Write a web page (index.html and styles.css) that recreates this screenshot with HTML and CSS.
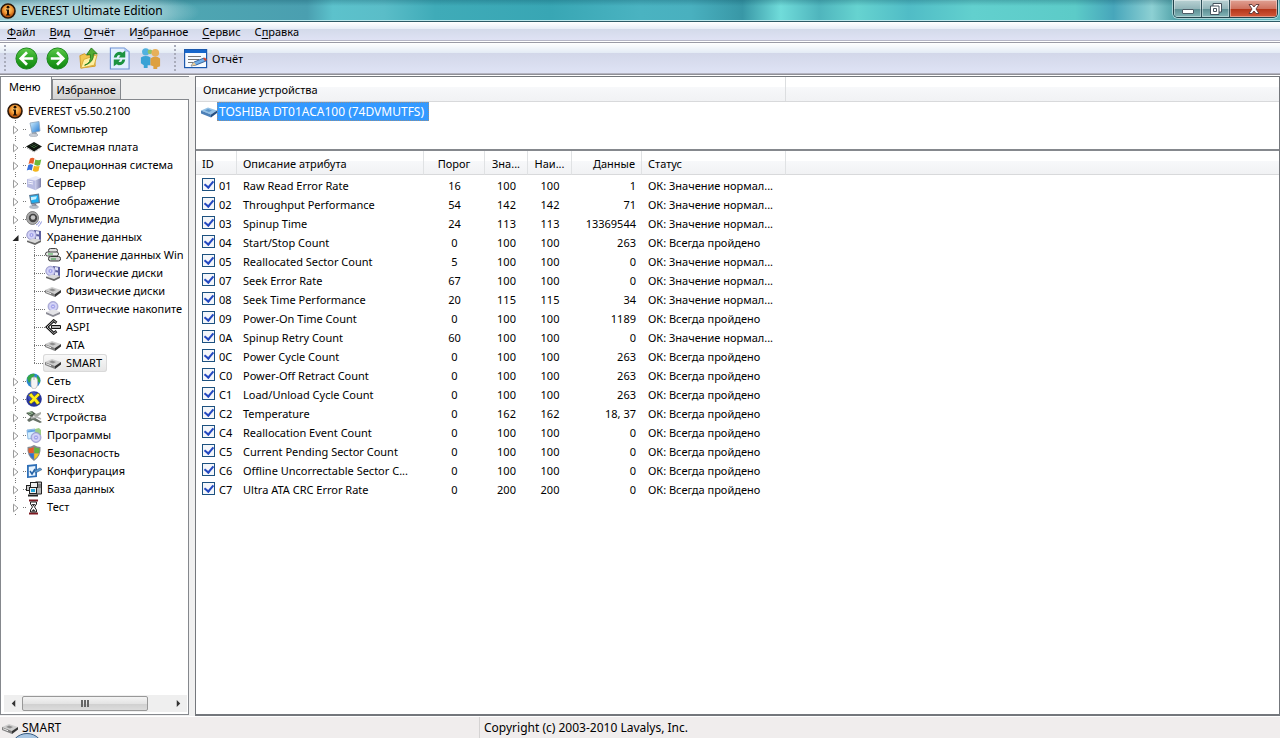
FILE: index.html
```html
<!DOCTYPE html>
<html lang="ru">
<head>
<meta charset="utf-8">
<title>EVEREST Ultimate Edition</title>
<link rel="stylesheet" href="styles.css">
</head>
<body>
<svg class="defs" aria-hidden="true">
  <defs>
    <linearGradient id="gGreen" x2="0" y2="1"><stop stop-color="#5fca4a"/><stop offset=".5" stop-color="#2ba524"/><stop offset="1" stop-color="#118511"/></linearGradient>
    <linearGradient id="gBlue" x2="1" y2="1"><stop stop-color="#d3f1ff"/><stop offset="1" stop-color="#1d76d2"/></linearGradient>
    <linearGradient id="gServer" x2="1" y2="0"><stop stop-color="#cfd1ee"/><stop offset="1" stop-color="#7c7fa9"/></linearGradient>
    <radialGradient id="gOrange" cx=".5" cy=".4"><stop stop-color="#ffd27a"/><stop offset=".6" stop-color="#f29a35"/><stop offset="1" stop-color="#c05a10"/></radialGradient>
    <radialGradient id="gDisc"><stop stop-color="#fff"/><stop offset=".25" stop-color="#9c9ce8"/><stop offset=".6" stop-color="#dcdcfa"/><stop offset="1" stop-color="#a9a9df"/></radialGradient>
  </defs>
  <symbol id="closed" viewBox="0 0 8 10"><path d="M1.500 1.200v7.600L6 5z" fill="#fff" stroke="#9a9a9a"/></symbol>
  <symbol id="open" viewBox="0 0 8 10"><path d="M6.500 2v6h-6z" fill="#222"/></symbol>
  <symbol id="info" viewBox="0 0 16 16"><circle cx="8" cy="8" r="7" fill="url(#gOrange)" stroke="#2a1607" stroke-width="1.6"/><circle cx="8" cy="4.2" r="1.4" fill="#1d0e02"/><path d="M6 6.600h3v5h1.200v1H6v-1h1v-4H6z" fill="#1d0e02"/></symbol>
  <symbol id="computer" viewBox="0 0 16 16"><path d="M4 2l9-1.500 1 9.500-8 2z" fill="url(#gBlue)" stroke="#8aa3bc" stroke-width=".8"/><path d="M6 12l4-1 1 2-5 1z" fill="#8b98a8"/><ellipse cx="7.500" cy="14" rx="4.500" ry="1.500" fill="#c9ced6" stroke="#9aa3af" stroke-width=".6"/></symbol>
  <symbol id="board" viewBox="0 0 16 16"><path d="M0 7.500L8 3l8 4.500-8 5z" fill="#101510"/><path d="M4 6.500l4-2.300 4 2.300L8 9z" fill="#4f9a4f"/><path d="M5 5.500l5 3M7 4.500l5 3M4 7.500l5-3M6 8.500l5-3" stroke="#111"/><path d="M1 9l7 4 7-4" stroke="#888" fill="none" stroke-width=".8" stroke-dasharray="1 1"/></symbol>
  <symbol id="windows" viewBox="0 0 16 16"><path d="M4 1.500q2.500-1.500 4.500 0L7.300 7Q5 5.500 2.500 7z" fill="#e8602c"/><path d="M9.300 2.500q3 1.500 6 0L14 8q-3 1.500-5.800-.5z" fill="#6eb93a"/><path d="M2.300 8Q4.500 6.500 7 8l-1.200 5.500Q3.500 12 .8 13.500z" fill="#3a72dc"/><path d="M8 8.700q3 1.300 5.700 0L12.500 14q-3 1.500-5.800-.3z" fill="#f3b51c"/></symbol>
  <symbol id="server" viewBox="0 0 16 16"><path d="M1 4l9-3 5 2-5 3z" fill="#e9eaf8"/><path d="M1 4l8 1.500V15l-8-3z" fill="#b9bce2"/><path d="M9 5.500L15 3v9l-6 3.500z" fill="url(#gServer)"/><path d="M2 6l5 1M2 8l5 1" stroke="#f5f5ff"/></symbol>
  <symbol id="display" viewBox="0 0 16 16"><path d="M3 2l10-1.500 1 9.500-9 1.500z" fill="#5d7b96"/><path d="M4.500 3l7.500-1 .7 7-7 1z" fill="#1eaef0"/><path d="M5 4l6-.8-1 3-5 1z" fill="#c7f2ff"/><path d="M6 11.500l4-.5 1 2-5 1z" fill="#778"/><ellipse cx="8" cy="14" rx="4.500" ry="1.400" fill="#bcc4cf" stroke="#8f99a8" stroke-width=".6"/></symbol>
  <symbol id="sound" viewBox="0 0 16 16"><ellipse cx="6.500" cy="7" rx="6" ry="6.500" fill="#aaa" stroke="#666" stroke-width=".8"/><circle cx="7" cy="7" r="4.200" fill="#444"/><circle cx="7" cy="6.500" r="2.300" fill="#c4c4c4"/><path d="M10 14q3-1 3.500-4M12 15.500q3-2 3.500-5" fill="none" stroke="#8f95dd"/></symbol>
  <symbol id="storage" viewBox="0 0 16 16"><path d="M8 1l7 1v9l-7-1z" fill="#5c5f9f"/><path d="M10 2l3 .5v3L10 5zM10 7l3 .5v3l-3-.5z" fill="#e6e7f8"/><circle cx="5.500" cy="6" r="4.800" fill="url(#gDisc)" stroke="#9999c5" stroke-width=".7"/><path d="M1 11.500L8 9.500l7 1.500-6 3z" fill="#d9d9d9"/><path d="M1 11.500L9 14l6-3v2l-6 3-8-3z" fill="#666"/></symbol>
  <symbol id="stack" viewBox="0 0 16 16"><rect x="3.500" y="1.500" width="9" height="4" rx="2" fill="#ddd" stroke="#444"/><rect x=".5" y="5" width="13" height="4" rx="2" fill="#eee" stroke="#444"/><rect x="3.500" y="9.500" width="12" height="4.500" rx="2" fill="#ccc" stroke="#333"/><path d="M3 7h5M6 12h5" stroke="#35a345"/></symbol>
  <symbol id="drive" viewBox="0 0 16 16"><path d="M0 7L7 4l9 3-6 4z" fill="#cfcfcf"/><path d="M0 7l10 4v3L0 10z" fill="#808080"/><path d="M10 11l6-4v2.500L10 14z" fill="#333"/><path d="M4 7l3-1.500L11 7 8 8.500z" fill="#8d8d8d"/><path d="M1 8.700l5 2" stroke="#eee"/></symbol>
  <symbol id="driveblue" viewBox="0 0 16 16"><path d="M0 6.500L7 3.500l9 3-6 4z" fill="#93c1e6"/><path d="M0 6.500l10 4v3L0 9.500z" fill="#4c80b8"/><path d="M10 10.500l6-4V9l-6 4.500z" fill="#244f82"/><path d="M4 6.500L7 5l4 1.500L8 8z" fill="#5f98cc"/></symbol>
  <symbol id="optical" viewBox="0 0 16 16"><circle cx="8" cy="5.500" r="5" fill="url(#gDisc)" stroke="#9999c5" stroke-width=".7"/><path d="M1 11l5-2h5l4 2-7 3z" fill="#e4e4e8"/><path d="M1 11l7 3 7-3v2l-7 3-7-3z" fill="#8b8b95"/></symbol>
  <symbol id="aspi" viewBox="0 0 16 16"><path d="M11.500 3.800L8.700 1.700 2 8l6.700 6.300 2.800-2.100" fill="none" stroke="#111" stroke-width="2.800"/><path d="M11.200 3.500L8.700 1.700 2 8l6.700 6.300 2.500-1.800" fill="none" stroke="#c4c4c4" stroke-width=".9"/><path d="M6.500 6.500h9v3h-9z" fill="#b5b5b5" stroke="#111"/></symbol>
  <symbol id="globe" viewBox="0 0 16 16"><circle cx="7.500" cy="7.500" r="7" fill="#2b86cf"/><path d="M1 5q3-5 8-4l-2 4-4 5zM11 2q4 3 3 8l-3-2z" fill="#35a746"/><path d="M5 7q0-3 3-3t3.500 3v5q-1 4-3.500 4T5 12z" fill="#f5f5f5" stroke="#b4b4b4" stroke-width=".7"/><path d="M8 4v3" stroke="#999" stroke-width=".7"/></symbol>
  <symbol id="directx" viewBox="0 0 16 16"><circle cx="8" cy="8" r="7.800" fill="#26349b"/><circle cx="7" cy="6" r="5" fill="#3e50bd"/><path d="M2.500 4l3-2 2.700 3.500L12 2l2 2-3.500 3.500L14 12l-3 1.800-2.600-3.600L5 13l-2-2 3.200-3.200z" fill="#ffee19" stroke="#5c5a00" stroke-width=".5"/></symbol>
  <symbol id="devices" viewBox="0 0 16 16"><path d="M0 4l6-2 4 3-5 3z" fill="#4d5a4d"/><path d="M2 4l4-1M3 6l4-2" stroke="#9cc29c"/><path d="M7 6l8-3v2l-5 4z" fill="#a6aaa3"/><path d="M1 11l5-4 10 6-2 1-7-3-4 2z" fill="#667066"/><path d="M5 9l6-1 4 2" stroke="#b8b8b8" fill="none" stroke-width="1.500"/></symbol>
  <symbol id="programs" viewBox="0 0 16 16"><path d="M1 3l8-1 1 9-8 1z" fill="#d4eeff" stroke="#8eb8e0"/><path d="M1.500 3.500l8-1v2l-8 1z" fill="#62a2e0"/><path d="M9 2l4-1 2 2v5l-5 1z" fill="#9dce86"/><circle cx="10" cy="10.500" r="5" fill="url(#gDisc)" stroke="#8f90c6" stroke-width=".7"/></symbol>
  <symbol id="shield" viewBox="0 0 16 16"><path d="M8 0q3 2 6.500 2 1 9-6.500 14Q.5 11 1.500 2 5 2 8 0z" fill="#858b92"/><path d="M7.700 2v6H3Q2.200 5.500 2.500 3.300 5 3.500 7.700 2z" fill="#e45c2c"/><path d="M8.300 2q2.500 1.500 5.200 1.300.2 2.500-.5 4.700H8.300z" fill="#64b33a"/><path d="M3 8.600h4.700v5.900Q4.500 12.500 3 8.600z" fill="#3270cf"/><path d="M8.300 8.600H13q-1.500 4-4.700 5.900z" fill="#f6c51f"/></symbol>
  <symbol id="config" viewBox="0 0 16 16"><path d="M1 2l10-1v13L1 15z" fill="#2e6fb7"/><path d="M2.800 3.700l6.500-.7v9.500l-6.500.7z" fill="#e7f4ff"/><path d="M4 8l2 3 3-5" stroke="#2563a8" stroke-width="1.500" fill="none"/><path d="M8 8l6-3 2 1.500L9.500 10z" fill="#5897d1" stroke="#2d5986" stroke-width=".6"/></symbol>
  <symbol id="database" viewBox="0 0 16 16"><path d="M9.500 1h6v12h-5z" fill="#b7b7b7" stroke="#222"/><path d="M11 4h4M11 6h4" stroke="#444"/><rect x="4.500" y="1.500" width="7" height="5" fill="#eee" stroke="#222"/><rect x=".5" y="4.500" width="4" height="5" fill="#ccc" stroke="#222"/><rect x="3.500" y="6.500" width="7" height="6" fill="#eee" stroke="#222"/><rect x="5" y="8" width="4" height="3" fill="#20a5d8"/><path d="M2 14.500h10" stroke="#222" stroke-width="2"/></symbol>
  <symbol id="hourglass" viewBox="0 0 16 16"><path d="M3 1.500h9M3 14.500h9" stroke="#7d1820" stroke-width="2.200"/><path d="M4.500 3v2l2 3-2 3v2h6v-2l-2-3 2-3V3z" fill="#fff" stroke="#222"/><path d="M5.500 5h4l-2 2.500zM5 12.500L7.500 10l2.500 2.500z" fill="#333"/></symbol>
  <symbol id="back" viewBox="0 0 24 24"><circle cx="12" cy="12" r="11" fill="url(#gGreen)" stroke="#18851a"/><path d="M12.500 5.500L6 12l6.500 6.500M6.500 12H19" fill="none" stroke="#fff" stroke-width="2.800"/></symbol>
  <symbol id="forward" viewBox="0 0 24 24"><circle cx="12" cy="12" r="11" fill="url(#gGreen)" stroke="#18851a"/><path d="M11.500 5.500L18 12l-6.500 6.500M17.500 12H5" fill="none" stroke="#fff" stroke-width="2.800"/></symbol>
  <symbol id="folder" viewBox="0 0 24 24"><path d="M3 9l5-2 2 2 8-2 1 13-15 2z" fill="#f2c64f" stroke="#d19a28"/><path d="M7 13l14-5-3 11-14 3z" fill="#fff0a0" stroke="#d9ab3a"/><path d="M8 19q7-2 6-11h-4l5-7 6 6h-4q1 9-9 12z" fill="#53ac36" stroke="#267e1d"/></symbol>
  <symbol id="refresh" viewBox="0 0 24 24"><path d="M2.500 1H17l5 4v18H2.500z" fill="#e3efff" stroke="#6f91d4" stroke-width="1.200"/><path d="M17 1v4h5z" fill="#a8c3ef"/><path d="M6 11q1-6 7-6l2 1 3-2v7h-7l2-2q-3-2-4 2zM18 13q-1 6-7 6l-2-1-3 2v-7h7l-2 2q3 2 4-2z" fill="#1c9340"/></symbol>
  <symbol id="people" viewBox="0 0 24 24"><circle cx="7" cy="5" r="3.800" fill="#52b1df"/><path d="M2 11q5-3 10 0v8H9v3H5v-3l-3-2z" fill="#3aa2d5"/><circle cx="11.500" cy="5" r="2.500" fill="#8cc46b"/><circle cx="17" cy="6" r="4" fill="#e7b05a"/><path d="M12 12q5-4 10 0v8l-3 1v2h-4v-3l-3-1z" fill="#dda040"/></symbol>
  <symbol id="report" viewBox="0 0 24 20"><rect x=".6" y=".6" width="22" height="18" fill="#f7fbff" stroke="#1c59ad" stroke-width="1.200"/><path d="M1 1h21v3H1z" fill="#1767cb"/><path d="M4 7.500h13M4 10.500h11M4 13.500h5" stroke="#777"/><path d="M7 17l3-4 10-4 2 3-10 4z" fill="#72afe9" stroke="#204d86" stroke-width=".8"/><path d="M19 9.500l2-1 2 2.500-2 1z" fill="#d14830"/><path d="M7 17l3-4 2 3z" fill="#f2cc90"/></symbol>
</svg>

<header class="titlebar">
  <svg class="icon"><use href="#info"/></svg>
  <h1 class="title">EVEREST Ultimate Edition</h1>
  <div class="window-buttons">
    <button class="win-btn" aria-label="Свернуть"><svg viewBox="0 0 12 12"><rect x=".5" y="6.500" width="11" height="4" rx=".5" fill="#fff" stroke="#4d5d68"/></svg></button>
    <button class="win-btn" aria-label="Восстановить"><svg viewBox="0 0 12 12"><path d="M3 .5h8.500V9H9v2.500H.5V3H3z" fill="#fff" stroke="#46535e"/><path d="M3 3h6v6M3.500 5.500h3v3h-3z" fill="none" stroke="#46535e"/></svg></button>
    <button class="win-btn win-close" aria-label="Закрыть"><svg viewBox="0 0 12 12"><path d="M1 1.500h3L6 4l2-2.500h3L8 6l3 4.500H8L6 8l-2 2.500H1L4 6z" fill="#fff" stroke="#5b3535" stroke-width=".9"/></svg></button>
  </div>
</header>

<nav class="menubar">
  <button><u>Ф</u>айл</button><button><u>В</u>ид</button><button><u>О</u>тчёт</button><button>И<u>з</u>бранное</button><button><u>С</u>ервис</button><button>С<u>п</u>равка</button>
</nav>

<div class="toolbar">
  <span class="grip"></span>
  <button class="tool" aria-label="Назад"><svg><use href="#back"/></svg></button>
  <button class="tool" aria-label="Вперёд"><svg><use href="#forward"/></svg></button>
  <button class="tool" aria-label="Вверх"><svg><use href="#folder"/></svg></button>
  <button class="tool" aria-label="Обновить"><svg><use href="#refresh"/></svg></button>
  <button class="tool" aria-label="Пользователи"><svg><use href="#people"/></svg></button>
  <span class="grip grip-second"></span>
  <button class="report-btn"><svg><use href="#report"/></svg>Отчёт</button>
</div>

<main class="workspace">
  <aside class="sidebar">
    <div class="tabs" role="tablist">
      <button class="tab tab-active" role="tab" aria-selected="true">Меню</button>
      <button class="tab" role="tab" aria-selected="false">Избранное</button>
    </div>
    <div class="tree-panel">
      <div class="tree-clip">
        <div class="root"><svg class="icon"><use href="#info"/></svg><span>EVEREST v5.50.2100</span></div>
        <ul class="tree">
          <li><div class="node"><svg class="exp"><use href="#closed"/></svg><svg class="icon"><use href="#computer"/></svg><span>Компьютер</span></div></li>
          <li><div class="node"><svg class="exp"><use href="#closed"/></svg><svg class="icon"><use href="#board"/></svg><span>Системная плата</span></div></li>
          <li><div class="node"><svg class="exp"><use href="#closed"/></svg><svg class="icon"><use href="#windows"/></svg><span>Операционная система</span></div></li>
          <li><div class="node"><svg class="exp"><use href="#closed"/></svg><svg class="icon"><use href="#server"/></svg><span>Сервер</span></div></li>
          <li><div class="node"><svg class="exp"><use href="#closed"/></svg><svg class="icon"><use href="#display"/></svg><span>Отображение</span></div></li>
          <li><div class="node"><svg class="exp"><use href="#closed"/></svg><svg class="icon"><use href="#sound"/></svg><span>Мультимедиа</span></div></li>
          <li><div class="node"><svg class="exp"><use href="#open"/></svg><svg class="icon"><use href="#storage"/></svg><span>Хранение данных</span></div>
            <ul class="subtree">
              <li class="leaf"><svg class="icon"><use href="#stack"/></svg><span>Хранение данных Win</span></li>
              <li class="leaf"><svg class="icon"><use href="#storage"/></svg><span>Логические диски</span></li>
              <li class="leaf"><svg class="icon"><use href="#drive"/></svg><span>Физические диски</span></li>
              <li class="leaf"><svg class="icon"><use href="#optical"/></svg><span>Оптические накопите</span></li>
              <li class="leaf"><svg class="icon"><use href="#aspi"/></svg><span>ASPI</span></li>
              <li class="leaf"><svg class="icon"><use href="#drive"/></svg><span>ATA</span></li>
              <li class="leaf"><div class="selected"><svg class="icon"><use href="#drive"/></svg><span>SMART</span></div></li>
            </ul>
          </li>
          <li><div class="node"><svg class="exp"><use href="#closed"/></svg><svg class="icon"><use href="#globe"/></svg><span>Сеть</span></div></li>
          <li><div class="node"><svg class="exp"><use href="#closed"/></svg><svg class="icon"><use href="#directx"/></svg><span>DirectX</span></div></li>
          <li><div class="node"><svg class="exp"><use href="#closed"/></svg><svg class="icon"><use href="#devices"/></svg><span>Устройства</span></div></li>
          <li><div class="node"><svg class="exp"><use href="#closed"/></svg><svg class="icon"><use href="#programs"/></svg><span>Программы</span></div></li>
          <li><div class="node"><svg class="exp"><use href="#closed"/></svg><svg class="icon"><use href="#shield"/></svg><span>Безопасность</span></div></li>
          <li><div class="node"><svg class="exp"><use href="#closed"/></svg><svg class="icon"><use href="#config"/></svg><span>Конфигурация</span></div></li>
          <li><div class="node"><svg class="exp"><use href="#closed"/></svg><svg class="icon"><use href="#database"/></svg><span>База данных</span></div></li>
          <li><div class="node"><svg class="exp"><use href="#closed"/></svg><svg class="icon"><use href="#hourglass"/></svg><span>Тест</span></div></li>
        </ul>
      </div>
      <div class="scrollbar">
        <button class="scroll-arrow" aria-label="Влево"><svg viewBox="0 0 4 8"><path d="M4 0v8L0 4z"/></svg></button>
        <div class="scroll-track"><div class="scroll-thumb"></div></div>
        <button class="scroll-arrow" aria-label="Вправо"><svg viewBox="0 0 4 8"><path d="M0 0v8l4-4z"/></svg></button>
      </div>
    </div>
  </aside>

  <section class="content">
    <div class="device-list">
      <div class="list-head"><span class="device-col">Описание устройства</span></div>
      <div class="device"><svg class="icon"><use href="#driveblue"/></svg><span class="device-name">TOSHIBA DT01ACA100 (74DVMUTFS)</span></div>
    </div>
    <table class="smart">
      <colgroup><col class="c-id"><col class="c-name"><col class="c-thr"><col class="c-val"><col class="c-worst"><col class="c-data"><col class="c-status"><col></colgroup>
      <thead><tr><th>ID</th><th>Описание атрибута</th><th class="mid">Порог</th><th class="mid">Зна...</th><th class="mid">Наи...</th><th class="num">Данные</th><th>Статус</th><th></th></tr></thead>
      <tbody>
        <tr><td><label><input type="checkbox" checked>01</label></td><td>Raw Read Error Rate</td><td class="mid">16</td><td class="mid">100</td><td class="mid">100</td><td class="num">1</td><td>ОК: Значение нормал...</td><td></td></tr>
        <tr><td><label><input type="checkbox" checked>02</label></td><td>Throughput Performance</td><td class="mid">54</td><td class="mid">142</td><td class="mid">142</td><td class="num">71</td><td>ОК: Значение нормал...</td><td></td></tr>
        <tr><td><label><input type="checkbox" checked>03</label></td><td>Spinup Time</td><td class="mid">24</td><td class="mid">113</td><td class="mid">113</td><td class="num">13369544</td><td>ОК: Значение нормал...</td><td></td></tr>
        <tr><td><label><input type="checkbox" checked>04</label></td><td>Start/Stop Count</td><td class="mid">0</td><td class="mid">100</td><td class="mid">100</td><td class="num">263</td><td>ОК: Всегда пройдено</td><td></td></tr>
        <tr><td><label><input type="checkbox" checked>05</label></td><td>Reallocated Sector Count</td><td class="mid">5</td><td class="mid">100</td><td class="mid">100</td><td class="num">0</td><td>ОК: Значение нормал...</td><td></td></tr>
        <tr><td><label><input type="checkbox" checked>07</label></td><td>Seek Error Rate</td><td class="mid">67</td><td class="mid">100</td><td class="mid">100</td><td class="num">0</td><td>ОК: Значение нормал...</td><td></td></tr>
        <tr><td><label><input type="checkbox" checked>08</label></td><td>Seek Time Performance</td><td class="mid">20</td><td class="mid">115</td><td class="mid">115</td><td class="num">34</td><td>ОК: Значение нормал...</td><td></td></tr>
        <tr><td><label><input type="checkbox" checked>09</label></td><td>Power-On Time Count</td><td class="mid">0</td><td class="mid">100</td><td class="mid">100</td><td class="num">1189</td><td>ОК: Всегда пройдено</td><td></td></tr>
        <tr><td><label><input type="checkbox" checked>0A</label></td><td>Spinup Retry Count</td><td class="mid">60</td><td class="mid">100</td><td class="mid">100</td><td class="num">0</td><td>ОК: Значение нормал...</td><td></td></tr>
        <tr><td><label><input type="checkbox" checked>0C</label></td><td>Power Cycle Count</td><td class="mid">0</td><td class="mid">100</td><td class="mid">100</td><td class="num">263</td><td>ОК: Всегда пройдено</td><td></td></tr>
        <tr><td><label><input type="checkbox" checked>C0</label></td><td>Power-Off Retract Count</td><td class="mid">0</td><td class="mid">100</td><td class="mid">100</td><td class="num">263</td><td>ОК: Всегда пройдено</td><td></td></tr>
        <tr><td><label><input type="checkbox" checked>C1</label></td><td>Load/Unload Cycle Count</td><td class="mid">0</td><td class="mid">100</td><td class="mid">100</td><td class="num">263</td><td>ОК: Всегда пройдено</td><td></td></tr>
        <tr><td><label><input type="checkbox" checked>C2</label></td><td>Temperature</td><td class="mid">0</td><td class="mid">162</td><td class="mid">162</td><td class="num">18, 37</td><td>ОК: Всегда пройдено</td><td></td></tr>
        <tr><td><label><input type="checkbox" checked>C4</label></td><td>Reallocation Event Count</td><td class="mid">0</td><td class="mid">100</td><td class="mid">100</td><td class="num">0</td><td>ОК: Всегда пройдено</td><td></td></tr>
        <tr><td><label><input type="checkbox" checked>C5</label></td><td>Current Pending Sector Count</td><td class="mid">0</td><td class="mid">100</td><td class="mid">100</td><td class="num">0</td><td>ОК: Всегда пройдено</td><td></td></tr>
        <tr><td><label><input type="checkbox" checked>C6</label></td><td>Offline Uncorrectable Sector C...</td><td class="mid">0</td><td class="mid">100</td><td class="mid">100</td><td class="num">0</td><td>ОК: Всегда пройдено</td><td></td></tr>
        <tr><td><label><input type="checkbox" checked>C7</label></td><td>Ultra ATA CRC Error Rate</td><td class="mid">0</td><td class="mid">200</td><td class="mid">200</td><td class="num">0</td><td>ОК: Всегда пройдено</td><td></td></tr>
      </tbody>
    </table>
  </section>
</main>

<footer class="statusbar">
  <div class="status-item"><svg class="icon"><use href="#drive"/></svg><span>SMART</span></div>
  <div class="status-copy">Copyright (c) 2003-2010 Lavalys, Inc.</div>
  <span class="orb"></span>
</footer>
</body>
</html>
```

FILE: styles.css
```css
* { box-sizing: border-box; }

body {
  margin: 0;
  height: 100vh;
  display: flex;
  flex-direction: column;
  overflow: hidden;
  background: #f0f0f0;
  color: #000;
  font: 11px/18px "Noto Sans", "Open Sans", sans-serif;
}

button {
  margin: 0;
  padding: 0;
  border: 0;
  background: none;
  color: inherit;
  font: inherit;
}

ul { margin: 0; padding: 0; list-style: none; }

.defs { position: absolute; width: 0; height: 0; }
.icon { flex: none; width: 16px; height: 16px; }

/* Title bar */
.titlebar {
  flex: none;
  height: 22px;
  display: flex;
  align-items: center;
  gap: 5px;
  padding-right: 2px;
  border-bottom: 1px solid #2c5a66;
  box-shadow: inset 0 -1px #b9e6ea;
  background:
    linear-gradient(rgba(0, 60, 80, .25), transparent 6px),
    radial-gradient(ellipse 110px 22px at 90px 12px, rgba(222, 238, 240, .7), rgba(200, 228, 232, .5) 65%, transparent),
    linear-gradient(90deg, #8fc3cc 0, #4fa6b2 14%, #4a9fb0 24%, #5cc2cc 26%, #5abdc8 30%, #3fabb8 34%, #38a6b4 43%, #4ab3c1 50%, #49b0bf 54%, #3897a6 58%, #70dcda 61%, #4fb5bd 64%, #66d3d0 67%, #50bcc6 71%, #62d0ce 76%, #5ccbc8 84%, #47a6bb 87%, #8dd0d3 90%, #4d9fa6 92%, #62b8bd 100%);
}
.title { margin: 0; flex: 1; font: inherit; font-size: 12px; }
.window-buttons {
  align-self: flex-start;
  display: flex;
  height: 18px;
  border: 1px solid #24444d;
  border-top: 0;
  border-radius: 0 0 5px 5px;
  overflow: hidden;
  box-shadow: 0 0 0 1px rgba(255, 255, 255, .5);
}
.win-btn {
  display: flex;
  align-items: center;
  justify-content: center;
  width: 28px;
  border-right: 1px solid #2f4f59;
  box-shadow: inset 0 0 0 1px rgba(255, 255, 255, .4);
  background: linear-gradient(#b9d2d4, #94b6ba 50%, #5b8d92 51%, #83b5b8);
}
.win-btn svg { width: 12px; height: 12px; }
.win-close {
  width: 47px;
  border-right: 0;
  background: linear-gradient(#e0a193, #cf7461 50%, #b23418 51%, #d2583a);
}

/* Menu and toolbar */
.menubar {
  flex: none;
  display: flex;
  height: 21px;
  border-bottom: 1px solid #9b9ba6;
  background: linear-gradient(#fff, #e6ecf6 7px, #d3daea 7px, #dfe2f4 18px, #b6b6c6 18px, #b6b6c6 19px, #fff 19px);
}
.menubar button { padding: 0 7px; height: 20px; }
.menubar u { text-underline-offset: 2px; }
.toolbar {
  flex: none;
  display: flex;
  align-items: center;
  height: 33px;
  padding: 0 4px 1px;
  border-bottom: 1px solid #fff;
  background: linear-gradient(#fff, #e3ebf5 10px, #d2d7e9 10px, #dfe3f5 30px, #b3b3c0 30px, #b3b3c0 31px, #909097 31px);
}
.grip {
  width: 2px;
  height: 27px;
  margin-right: 5px;
  background: repeating-linear-gradient(#a9acbb 0 2px, transparent 2px 4px);
}
.grip-second { margin: 0 8px; }
.tool { width: 31px; height: 24px; }
.tool svg { display: block; width: 23px; height: 23px; margin: 0 auto; }
.report-btn { display: flex; align-items: center; gap: 4px; }
.report-btn svg { width: 24px; height: 20px; }

/* Sidebar */
.workspace { flex: 1; min-height: 0; display: flex; gap: 6px; }
.sidebar { flex: none; width: 189px; display: flex; flex-direction: column; border-top: 1px solid #85888d; }
.tabs { display: flex; align-items: flex-end; height: 22px; flex: none; }
.tab {
  height: 20px;
  padding: 0 4px;
  border: 1px solid #85888d;
  border-bottom: 0;
  background: linear-gradient(#f0f0f0, #d2d2d2);
}
.tab-active {
  height: 22px;
  padding: 0 10px 2px 8px;
  border-top: 0;
  background: #fff;
}
.tree-panel {
  flex: 1;
  min-height: 0;
  display: flex;
  flex-direction: column;
  margin-bottom: 1px;
  padding: 3px 1px 2px 3px;
  border: 1px solid #85888d;
  border-top: 0;
  background: linear-gradient(#85888d, #85888d) right top / 138px 1px no-repeat #fff;
}
.tree-clip { flex: 1; min-height: 0; overflow: hidden; white-space: nowrap; }
.root { display: flex; align-items: center; gap: 5px; height: 18px; padding-left: 3px; }
.tree { background: repeating-linear-gradient(#777 0 1px, transparent 1px 2px) 11px 0 / 1px 398px no-repeat; }
.node {
  display: flex;
  align-items: center;
  height: 18px;
  padding-left: 8px;
  background: repeating-linear-gradient(90deg, #777 0 1px, transparent 1px 2px) 19px 9px / 3px 1px no-repeat;
}
.node span, .leaf span { margin-left: 5px; }
.exp {
  flex: none;
  width: 8px;
  height: 12px;
  margin: 2px 6px 0 0;
  background: #fff;
}
.subtree { background: repeating-linear-gradient(#777 0 1px, transparent 1px 2px) 30px 0 / 1px 117px no-repeat; }
.leaf {
  display: flex;
  align-items: center;
  height: 18px;
  padding-left: 41px;
  background: repeating-linear-gradient(90deg, #777 0 1px, transparent 1px 2px) 30px 9px / 11px 1px no-repeat;
}
.selected {
  display: flex;
  align-items: center;
  height: 18px;
  margin-left: -2px;
  padding: 0 5px 0 2px;
  border-radius: 3px;
  box-shadow: inset 0 0 0 1px #d9d9d9;
  background: linear-gradient(#fafafa, #e5e5e5);
}
.scrollbar { flex: none; display: flex; height: 17px; background: #efefef; }
.scroll-arrow { width: 18px; display: flex; align-items: center; justify-content: center; }
.scroll-arrow svg { width: 5px; height: 7px; fill: #333; }
.scroll-track { flex: 1; padding: 1px 0; }
.scroll-thumb {
  width: 86%;
  height: 15px;
  border: 1px solid #989898;
  border-radius: 2px;
  background:
    repeating-linear-gradient(90deg, #666 0 2px, transparent 2px 3px) center / 8px 7px no-repeat,
    linear-gradient(#f4f4f4, #e4e4e4 50%, #cfcfcf 51%, #dcdcdc);
}

/* Content */
.content {
  flex: 1;
  min-width: 0;
  border: 1px solid #74777c;
  border-bottom-width: 2px;
  background: #fff;
}
.device-list { height: 74px; border-bottom: 2px solid #85888d; }
.list-head {
  display: flex;
  height: 25px;
  border-bottom: 1px solid #d8d9db;
  background: linear-gradient(#fff 10px, #f7f8fa 10px, #f1f2f4);
}
.device-col { width: 590px; padding: 3px 7px; border-right: 1px solid #dcdee0; line-height: 20px; }
.device { display: flex; align-items: center; padding-left: 5px; }
.device-name {
  padding: 0 4px 0 1px;
  border: 1px dotted #8f8f8f;
  background: #3399ff;
  color: #fff;
  font-size: 12px;
  line-height: 17px;
}
.smart { width: 100%; table-layout: fixed; border-collapse: separate; border-spacing: 0; }
.c-id { width: 41px; }
.c-name { width: 187px; }
.c-thr { width: 61px; }
.c-val { width: 43px; }
.c-worst { width: 44px; }
.c-data { width: 70px; }
.c-status { width: 144px; }
.smart th {
  height: 24px;
  padding: 3px 6px 0;
  border-right: 1px solid #e0e2e4;
  border-bottom: 1px solid #d8d9db;
  background: linear-gradient(#fff 10px, #f7f8fa 10px, #f1f2f4);
  font-weight: normal;
  text-align: left;
}
.smart th:last-child { border-right: 0; }
.smart td { height: 19px; padding: 0 6px; white-space: nowrap; }
.smart tbody tr:first-child td { height: 20px; padding-top: 1px; }
.smart th.mid, .smart td.mid { padding-left: 0; padding-right: 0; text-align: center; }
.smart th.num, .smart td.num { text-align: right; }
.smart label { display: flex; align-items: center; gap: 4px; }
.smart input {
  appearance: none;
  flex: none;
  width: 13px;
  height: 13px;
  margin: 0 0 2px;
  border: 1px solid #1c5180;
  background: #f4f6fa;
  display: flex;
  justify-content: center;
  align-items: center;
}
.smart input:checked::before {
  content: "";
  width: 4px;
  height: 7px;
  margin-bottom: 2px;
  border: solid #2348c0;
  border-width: 0 2px 2px 0;
  transform: rotate(40deg);
}

/* Status bar */
.statusbar {
  position: relative;
  flex: none;
  display: flex;
  height: 22px;
  padding-left: 2px;
  overflow: hidden;
  border-top: 1px solid #fff;
  background: #f0eded;
  font-size: 12px;
  line-height: 22px;
}
.status-item { display: flex; align-items: center; gap: 4px; width: 478px; border-right: 1px solid #d5d3d3; }
.status-copy { padding-left: 4px; }
.orb {
  position: absolute;
  left: 10px;
  top: 16px;
  width: 34px;
  height: 34px;
  border: 1px solid #365a80;
  border-radius: 50%;
  background: #a9c6e2;
}
```
